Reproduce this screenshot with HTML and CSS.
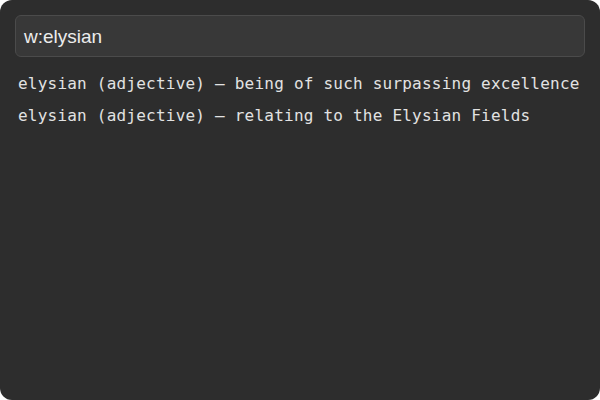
FILE: index.html
```html
<!DOCTYPE html>
<html>
<head>
<meta charset="utf-8">
<link rel="stylesheet" href="styles.css">
</head>
<body>
<div class="window">
  <div class="search">w:elysian</div>
  <ul class="results">
    <li>elysian (adjective) — being of such surpassing excellence</li>
    <li>elysian (adjective) — relating to the Elysian Fields</li>
  </ul>
</div>
</body>
</html>
```
FILE: styles.css
```css
html, body {
  margin: 0;
  padding: 0;
  background: #ffffff;
}
.window {
  width: 600px;
  height: 400px;
  box-sizing: border-box;
  background: #2d2d2d;
  border-radius: 12px;
  padding: 15px;
  overflow: hidden;
}
.search {
  height: 42px;
  box-sizing: border-box;
  background: #383838;
  border: 1px solid #4b4b4b;
  border-radius: 6px;
  padding: 2px 8px 0;
  display: flex;
  align-items: center;
  font-family: "Liberation Sans", Arial, sans-serif;
  font-size: 19px;
  color: #ececec;
}
.results {
  list-style: none;
  margin: 0;
  padding: 0 0 0 3px;
  margin-top: 11px;
}
.results li {
  font-family: "DejaVu Sans Mono", monospace;
  font-size: 16px;
  letter-spacing: 0.22px;
  line-height: 32px;
  color: #e2e2e2;
  white-space: nowrap;
}
```
